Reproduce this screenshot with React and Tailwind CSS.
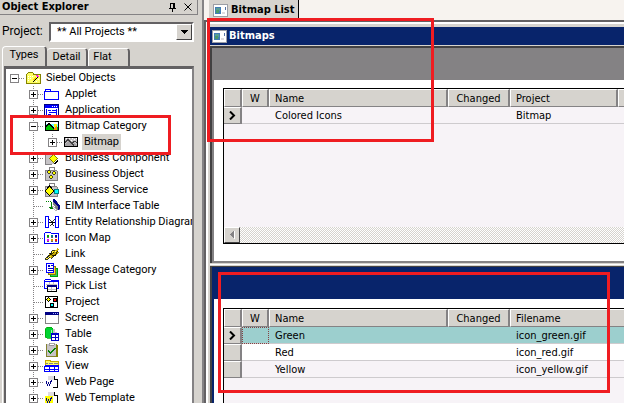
import clsx from "clsx";

const ICONS = {
  root: (
    <>
      <path d="M1.5 13.500V4.500L3.500 2.500H7.500L9 4.500H15.500V13.500Z" fill="#ffff63" stroke="#848200" />
      <path d="M3 6h1v1h-1zM5 6h1v1h-1zM7 6h1v1h-1zM3 8h1v1h-1zM5 8h1v1h-1zM3 10h1v1h-1zM13 9h1v1h-1zM11 11h1v1h-1z" fill="#fff" />
      <path d="M7 12h2v-1h1v-1h1v-1h1v-1h1v-1h-1v1h-1v1h-1v1h-1v1h-1z" fill="#000" />
      <path d="M8 9h1v-1h1v-1h1v2h-1v1h-2z" fill="#ffcf00" />
      <path d="M11 5h2v1h1v1h-2v-1h-1z" fill="#ff00ff" />
    </>
  ),
  applet: <path d="M1.500 5V3.500h5V5M.5 5.500h14v8H.5z" fill="#fff" stroke="#00f" />,
  application: (
    <>
      <path d="M.5 2.500h14v12H.5z" fill="#fff" stroke="#000084" />
      <path d="M1 3h13v3H1z" fill="#0000ff" />
      <path d="M8 4h1v1H8zM10 4h1v1h-1zM12 4h1v1h-1z" fill="#fff" />
      <path d="M4 8.500h3M5 10.500h7M4 12.500h3M8 8.500h4M2.500 7v7M12.500 7v7" stroke="#0000ff" />
    </>
  ),
  category: (
    <>
      <path d="M1.500 3.500h13v9h-13z" fill="#63ffff" stroke="#000" />
      <path d="M2 4h12v2H2z" fill="#fff" />
      <path d="M2 8l3-3 3 3 2 2 2-2 2 2v2H2z" fill="#00c700" />
      <path d="M2 8.500l3-3 6 6" fill="none" stroke="#000" />
      <path d="M10 6h3v3h-3z" fill="#ffef00" />
      <path d="M11 9l2-1v4h-3z" fill="#ff8a00" />
    </>
  ),
  bitmap: (
    <>
      <path d="M1.500 3.500h13v9h-13z" fill="#c6c3c6" stroke="#000" />
      <path d="M2 10l3-3 4 4 2-2 3 2v1H2z" fill="#a5a2a5" />
      <path d="M2 8.500l3-3 6 6M9 9l3-2 2 2" fill="none" stroke="#424142" />
      <path d="M3 4h1v1H3zM6 4h1v1H6zM9 4h1v1H9zM11 5h1v1h-1zM8 6h1v1H8zM13 4h1v1h-1z" fill="#fff" />
    </>
  ),
  component: (
    <>
      <path d="M1 3h9v11H1z" fill="#c6c3c6" />
      <path d="M1.500 3v11H8" fill="none" stroke="#848284" />
      <path d="M9.500 4.500l4 4-4 4-4-4z" fill="#ffff00" stroke="#848200" />
      <path d="M10 13h1v-1h1v-1h1v-1h1" fill="none" stroke="#000" />
    </>
  ),
  object: (
    <>
      <path d="M5 4V1.500h5V4" fill="none" stroke="#848284" />
      <path d="M1 4h11l1 1v9H1z" fill="#c6c3c6" stroke="#848284" />
      <path d="M5 4l2 2-2 2-2-2zM10 5l2 2-2 2-2-2zM7 9l2 2-2 2-2-2z" fill="#ffff00" stroke="#000" strokeWidth=".7" />
    </>
  ),
  service: (
    <>
      <path d="M5 4V1.500h5V4" fill="none" stroke="#848284" />
      <path d="M1 4h11l1 1v9H1z" fill="#c6c3c6" stroke="#848284" />
      <path d="M5.500 4l4.500 5-4.500 4.500L1 9z" fill="#ffff00" stroke="#000" />
      <path d="M10.500 7.500h4v4h-4z" fill="#00ffff" stroke="#008284" />
    </>
  ),
  eim: (
    <>
      <path d="M2 3.500h1M4 3.500h1M6 3.500h1" stroke="#008200" />
      <path d="M7.500 4v6M5 9.500h5M6 10.500h3" fill="none" stroke="#008200" />
      <path d="M9 2h3l4 6v4h-3L9 6z" fill="#848284" />
      <path d="M9 1h2l5 7v3l-2 1v-3l-5-5z" fill="#000084" />
      <path d="M9 8l4 4-1 1-4-4z" fill="#fff" stroke="#848284" strokeWidth=".6" />
    </>
  ),
  entity: (
    <>
      <path d="M1 2.500h3.500v11H1M15 2.500h-3.500v11H15M1.500 2v12M14.500 2v12" fill="none" stroke="#00f" />
      <path d="M5 8.500h6" fill="none" stroke="#000" />
      <path d="M5 5l3.500 3.500L5 12M11 5L8 8.500l3 3.500" fill="none" stroke="#000" strokeWidth=".8" />
    </>
  ),
  iconMap: (
    <>
      <path d="M.5 13.500V3.500l1-1h5l1 1h7v10z" fill="#fff" stroke="#00f" />
      <path d="M3 5h2v2H3z" fill="#00a200" />
      <path d="M7 5h2v2H7z" fill="#008284" />
      <path d="M11 5h2v2h-2z" fill="#0000a5" />
      <path d="M3 9h2v2H3z" fill="#ff00ff" />
      <path d="M7 9h2v2H7z" fill="#c69a00" />
      <path d="M11 9h2v2h-2z" fill="#ff0000" />
      <path d="M3 7.500h2M7 7.500h2M11 7.500h2M3 11.500h2M7 11.500h2M11 11.500h2" stroke="#636163" />
    </>
  ),
  link: (
    <>
      <path d="M1 13l5-5 3-4 2 1-2 4-5 4z" fill="#ffef31" stroke="#000" strokeWidth=".8" />
      <path d="M7 12l3-5 4-4M5 9l4 1 2-1 3-3" fill="none" stroke="#c6aa00" strokeWidth="2" />
      <path d="M7 13l3-3 4-5M3 12l7-6M5 7h3M8 9.500h4" fill="none" stroke="#000" strokeWidth=".8" />
      <path d="M12 3h1v1h-1zM11 5h1v1h-1zM4 11h1v1H4z" fill="#ffff9c" />
    </>
  ),
  message: (
    <>
      <path d="M6.500 6.500h7v8h-7z" fill="#31c763" stroke="#00a200" />
      <path d="M4.500 4.500h7v8h-7z" fill="#ffcf31" stroke="#848200" />
      <path d="M2.500 1.500h7v9h-7z" fill="#fff" stroke="#00f" />
      <path d="M4 3.500h2M4 4.500h2M7 3.500h2M4 6.500h5M4 8.500h5" stroke="#0000c6" />
    </>
  ),
  pickList: (
    <>
      <path d="M.5 10.500V2.500l1-1h5l1 1h7v8z" fill="#fff" stroke="#00f" />
      <path d="M1 3h13v1H1z" fill="#00f" />
      <path d="M2 6.500h11M2 8.500h2M5.500 4v4M9.500 4v4" stroke="#c6c3c6" />
      <path d="M3.500 7.500h9v6h-9z" fill="#fff" stroke="#000" />
      <path d="M3 7h10v2H3z" fill="#000084" />
      <path d="M4 11.500h8M7.500 9v4" stroke="#c6c3c6" />
    </>
  ),
  project: (
    <>
      <path d="M1.500 2.500h12v11h-12z" fill="#fff" stroke="#000" />
      <path d="M4 3h1v1h1v1h1v1H6v1H5v1H4V7H3V6H2V5h1V4h1z" fill="#000" />
      <path d="M4 4h1v1h1v1H5v1H4V6H3V5h1z" fill="#ffff00" />
      <path d="M9 4h4v4H9zM6 9h4v4H6z" fill="#000" />
      <path d="M10 5h2v2h-2z" fill="#ff0000" />
      <path d="M7 10h2v2H7z" fill="#00ffff" />
    </>
  ),
  screen: (
    <>
      <path d="M1.500 2.500h13v11h-13z" fill="#fff" stroke="#848284" />
      <path d="M1 2h14v3H1z" fill="#000084" />
      <path d="M9 3h1v1H9zM11 3h1v1h-1zM13 3h1v1h-1z" fill="#a5b2ff" />
    </>
  ),
  table: (
    <>
      <path d="M1 3l2-2h4l2 2v8l-2 1H3l-2-1z" fill="#00d331" stroke="#00a200" strokeWidth=".7" />
      <path d="M7 4h1v7H7z" fill="#9cf3b5" />
      <path d="M9 3h2v3h2v2H9z" fill="#c6c3c6" />
      <path d="M7.500 7.500h7v7h-7z" fill="#fff" stroke="#0000c6" />
      <path d="M8 8.500h6M8 11.500h6M11.500 9v5" stroke="#0000c6" />
    </>
  ),
  task: (
    <>
      <path d="M2 2h11v13H2z" fill="#c6c3c6" />
      <path d="M2.500 2v12.500H12.500V2" fill="none" stroke="#848231" />
      <path d="M12 3h2v12h-2z" fill="#848200" />
      <path d="M5 1h5v2H5z" fill="#fff" stroke="#848284" strokeWidth=".7" />
      <path d="M4 8.500l2.500 2.500 5-5" fill="none" stroke="#008200" strokeWidth="1.300" />
    </>
  ),
  view: (
    <>
      <path d="M1.500 7.500V2.500h5v1h8v4z" fill="#ffff63" stroke="#c6aa00" />
      <path d="M2 5.500h2M5 5.500h4M10 5.500h4" stroke="#848284" />
      <path d="M.5 8.500h14v5H.5z" fill="#fff" stroke="#00f" />
      <path d="M1 7.500h14M1 11.500h13M5.500 9v4M10.500 9v4" stroke="#00f" />
    </>
  ),
  webPage: (
    <>
      <path d="M4 2h6v4H4z" fill="#dedbde" />
      <path d="M10.500 2v3.500h3v8H9" fill="none" stroke="#000" />
      <path d="M2.500 7v3M3.500 10v2M4.500 8v2M5.500 10v2M6.500 7v3M7.500 6v2" fill="none" stroke="#000084" />
    </>
  ),
  webTemplate: (
    <>
      <path d="M4 2h6v4H4z" fill="#dedbde" />
      <path d="M10.500 2v3.500h3v8H9" fill="none" stroke="#000" />
      <path d="M1 6h8v8H1z" fill="#ffff00" />
      <path d="M2.500 8v3M3.500 11v2M4.500 9v2M5.500 11v2M6.500 8v3M7.500 7v2" fill="none" stroke="#000084" />
    </>
  ),
};

const TREE = [
  { label: "Applet", icon: "applet", state: "plus" },
  { label: "Application", icon: "application", state: "plus" },
  { label: "Bitmap Category", icon: "category", state: "minus" },
  { label: "Bitmap", icon: "bitmap", state: "plus", nested: true, selected: true },
  { label: "Business Component", icon: "component", state: "plus" },
  { label: "Business Object", icon: "object", state: "plus" },
  { label: "Business Service", icon: "service", state: "plus" },
  { label: "EIM Interface Table", icon: "eim" },
  { label: "Entity Relationship Diagram", icon: "entity", state: "plus" },
  { label: "Icon Map", icon: "iconMap", state: "plus" },
  { label: "Link", icon: "link" },
  { label: "Message Category", icon: "message", state: "plus" },
  { label: "Pick List", icon: "pickList" },
  { label: "Project", icon: "project" },
  { label: "Screen", icon: "screen", state: "plus" },
  { label: "Table", icon: "table", state: "plus" },
  { label: "Task", icon: "task", state: "plus" },
  { label: "View", icon: "view", state: "plus" },
  { label: "Web Page", icon: "webPage", state: "plus" },
  { label: "Web Template", icon: "webTemplate", state: "plus" },
];

// Dotted connector lines plus the optional +/- box
function Gutter({ state, top = true, bottom = true, branch = true }) {
  return (
    <svg width="19" height="16" viewBox="0 0 19 16" shapeRendering="crispEdges" className="shrink-0" aria-hidden="true">
      <g stroke="#848284" strokeDasharray="1 1">
        {top && <path d="M8.500 0v8" />}
        {bottom && <path d="M8.500 8v8" />}
        {branch && <path d="M9 8.500h10" />}
      </g>
      {state && (
        <>
          <path d="M4.500 4.500h8v8h-8z" fill="#fff" stroke="#848284" />
          <path d={state === "plus" ? "M6 8.500h5M8.500 6v5" : "M6 8.500h5"} stroke="#000" />
        </>
      )}
    </svg>
  );
}

function TreeIcon({ name }) {
  return (
    <svg width="16" height="16" viewBox="0 0 16 16" shapeRendering="crispEdges" className="shrink-0" aria-hidden="true">
      {ICONS[name]}
    </svg>
  );
}

function TreeRow({ item }) {
  return (
    <li className="flex h-4 items-center pl-[19px]">
      {item.nested && <Gutter branch={false} />}
      <Gutter state={item.state} bottom={!item.nested} />
      <TreeIcon name={item.icon} />
      <button className={clsx("ml-[3px] h-4 px-0.5 leading-4", item.selected && "bg-[#d6d3ce]")}>{item.label}</button>
    </li>
  );
}

function WindowIcon() {
  return (
    <svg width="15" height="13" viewBox="0 0 15 13" shapeRendering="crispEdges" className="shrink-0" aria-hidden="true">
      <path d="M0 0h15v13H0z" fill="#9c9ea5" />
      <path d="M1 1h13v11H1z" fill="#fff" />
      <path d="M2 3h6v7H2z" fill="#427db5" />
      <path d="M3 4h4v3H3z" fill="#5a9e94" />
      <path d="M3 6h3v3H3z" fill="#4a9a6b" />
      <path d="M9 8h3v2H9z" fill="#dedbde" />
      <path d="M12 3h1v3h-1z" fill="#5271a5" />
    </svg>
  );
}

function ExplorerPanel() {
  return (
    <aside className="flex w-[204px] shrink-0 flex-col border-r-2 border-[#848284] bg-[#d6d3ce] pr-1 font-['Roboto','Liberation_Sans',sans-serif] text-[11px]">
      <header className="flex h-[15px] items-center border-r border-b border-[#848284] pl-[2px] pr-[5px]">
        <h2 className="flex-1 font-['DejaVu_Sans_Condensed','DejaVu_Sans',sans-serif] text-[11px] leading-[14px] font-bold">Object Explorer</h2>
        <button aria-label="Auto hide" className="mr-[7px]">
          <svg width="9" height="10" viewBox="0 0 9 10" shapeRendering="crispEdges">
            <path d="M2 1h5v5h1v1H5v3H4V7H1V6h1z" fill="#000" />
            <path d="M3 2h2v4H3z" fill="#d6d3ce" />
          </svg>
        </button>
        <button aria-label="Close">
          <svg width="8" height="8" viewBox="0 0 8 8">
            <path d="M.5.5l7 7M7.500.5l-7 7" stroke="#000" />
          </svg>
        </button>
      </header>

      <div className="mt-[7px] flex h-5 items-center pr-1 pl-[2px]">
        <label htmlFor="project" className="w-[47px] pb-0.5 text-xs">Project:</label>
        <div className="flex h-5 min-w-0 flex-1 border-2 border-t-[#636163] border-r-white border-b-white border-l-[#636163] bg-white">
          <select id="project" className="min-w-0 flex-1 appearance-none pl-[6px] leading-4">
            <option>** All Projects **</option>
          </select>
          <span className="flex w-4 items-center justify-center border border-t-white border-r-[#424142] border-b-[#424142] border-l-white bg-[#d6d3ce]" aria-hidden="true">
            <svg width="7" height="4" viewBox="0 0 7 4" shapeRendering="crispEdges">
              <path d="M0 0h7v1H6v1H5v1H4v1H3V3H2V2H1V1H0z" />
            </svg>
          </span>
        </div>
      </div>

      <div role="tablist" className="mt-1 flex h-5 items-end pl-[2px]">
        <button role="tab" aria-selected="true" className="h-5 w-[45px] rounded-t-sm border-t border-r-2 border-l border-t-white border-r-[#636163] border-l-white pb-0.5">Types</button>
        <button role="tab" aria-selected="false" className="h-[18px] w-[41px] rounded-t-sm border-t border-r-2 border-t-white border-r-[#636163]">Detail</button>
        <button role="tab" aria-selected="false" className="h-[18px] w-[42px] rounded-t-sm border-t border-r-2 border-l border-t-white border-r-[#636163] border-l-white pr-3">Flat</button>
      </div>

      <div className="ml-[2px] flex min-h-0 flex-1 border-l border-white pl-px">
        <ul className="mr-1 min-w-0 flex-1 overflow-hidden border-t-[3px] border-r-2 border-l-2 border-t-[#636163] border-r-[#848284] border-l-[#636163] bg-white pt-px whitespace-nowrap">
          <li className="flex h-4 items-center">
            <Gutter state="minus" top={false} bottom={false} />
            <TreeIcon name="root" />
            <button className="ml-[3px] px-0.5 leading-4">Siebel Objects</button>
          </li>
          {TREE.map((item) => (
            <TreeRow key={item.label} item={item} />
          ))}
        </ul>
      </div>
    </aside>
  );
}

function HeaderCell({ children, center, last }) {
  return (
    <th
      className={clsx(
        "h-[18px] border-t border-b border-l border-t-white border-b-[#848284] border-l-white bg-[#d6d3ce] p-0 pt-px font-normal",
        center ? "text-center" : "pl-[5px] text-left",
        !last && "border-r-2 border-r-[#848284]",
      )}
    >
      {children}
    </th>
  );
}

function RecordGrid({ lastColumn, rows, trailing }) {
  return (
    <table className="w-full table-fixed border-separate border-spacing-0 text-[11px] leading-[14px]">
      <colgroup>
        <col className="w-[18px]" />
        <col className="w-[27px]" />
        <col className="w-[179px]" />
        <col className="w-[62px]" />
        <col className={trailing ? "w-[108px]" : ""} />
        {trailing && <col />}
      </colgroup>
      <thead>
        <tr>
          <HeaderCell />
          <HeaderCell center>W</HeaderCell>
          <HeaderCell>Name</HeaderCell>
          <HeaderCell center>Changed</HeaderCell>
          <HeaderCell last={!trailing}>{lastColumn}</HeaderCell>
          {trailing && <HeaderCell last />}
        </tr>
      </thead>
      <tbody>
        {rows.map((row) => {
          const cell = clsx("h-[17px] border-b border-[#cecbce] p-0 pt-0.5", row.active && "bg-[#9ccfce]", row.white && "bg-white");
          return (
            <tr key={row.name}>
              <td className="h-[17px] border-t border-r-2 border-b border-t-white border-r-[#848284] border-b-[#848284] bg-[#d6d3ce] p-0">
                {row.current && (
                  <svg width="7" height="9" viewBox="0 0 7 9" className="mx-auto" aria-label="Current record">
                    <path d="M1 .5l4 4-4 4" fill="none" stroke="#000" strokeWidth="2" />
                  </svg>
                )}
              </td>
              <td className={clsx(cell, row.active && "outline outline-dotted -outline-offset-1 outline-[#844142]")} />
              <td className={clsx(cell, "pl-[6px]")}>{row.name}</td>
              <td className={cell} />
              <td className={clsx(cell, "pl-[6px]")}>{row.value}</td>
              {trailing && <td className={cell} />}
            </tr>
          );
        })}
      </tbody>
    </table>
  );
}

function Workspace() {
  return (
    <main className="flex min-w-0 flex-1 flex-col bg-[#f7f3ef] font-['DejaVu_Sans_Condensed','DejaVu_Sans',sans-serif]">
      <div className="flex h-5 pl-[5px]">
        <button className="flex h-[18px] items-center gap-[3px] border-r border-black bg-[#d6d3ce] pt-0.5 pr-[3px] pl-1 text-[11px] font-bold">
          <WindowIcon />
          Bitmap List
        </button>
      </div>

      <div className="flex min-h-0 flex-1 flex-col border-t-2 border-l-2 border-[#636163] bg-[#d6d3ce]">
        <div className="flex min-h-0 flex-1 flex-col border-t-2 border-l-2 border-white pt-[3px] pl-[2px]">
          <h1 className="flex h-[18px] shrink-0 items-center gap-[2px] bg-[#08246b] pt-px pl-[2px] text-[11px] font-bold text-white">
            <WindowIcon />
            Bitmaps
          </h1>

          <section className="mt-px shrink-0 border-t-2 border-l-2 border-[#424142]">
            <div className="border-b-2 border-l-2 border-[#848284]">
              <div className="h-8 bg-[#848284]" />
              <div className="bg-white pt-2 pb-[17px] pl-[9px]">
                <div className="flex h-[156px] flex-col border-y border-l border-black bg-[#f7f3f7]">
                  <RecordGrid
                    trailing
                    lastColumn="Project"
                    rows={[{ name: "Colored Icons", value: "Bitmap", current: true }]}
                  />
                  <div className="mt-auto h-4 bg-[repeating-conic-gradient(#fff_0_25%,#d6d3ce_0_50%)] bg-[length:2px_2px]">
                    <button
                      aria-label="Scroll left"
                      className="flex h-4 w-4 items-center justify-center border border-t-white border-r-[#424142] border-b-[#424142] border-l-white bg-[#d6d3ce]"
                    >
                      <svg width="5" height="8" viewBox="0 0 5 8" shapeRendering="crispEdges">
                        <path d="M4 0h1v8H4z" fill="#fff" />
                        <path d="M4 0v7H3V6H2V5H1V4H0V3h1V2h1V1h1V0z" fill="#848284" />
                      </svg>
                    </button>
                  </div>
                </div>
              </div>
            </div>
          </section>

          <section className="mt-px flex min-h-0 flex-1 flex-col border-t border-white pt-px">
            <div className="flex min-h-0 flex-1 flex-col border-t border-l-2 border-[#424142]">
              <div className="flex min-h-0 flex-1 flex-col border-l-2 border-[#08246b] bg-white">
                <div className="h-8 shrink-0 bg-[#08246b]" />
                <div className="mt-[9px] ml-[9px] min-h-0 flex-1 overflow-hidden border-t border-l border-black bg-[#f7f3f7]">
                  <RecordGrid
                    lastColumn="Filename"
                    rows={[
                      { name: "Green", value: "icon_green.gif", current: true, active: true },
                      { name: "Red", value: "icon_red.gif", white: true },
                      { name: "Yellow", value: "icon_yellow.gif" },
                    ]}
                  />
                </div>
              </div>
            </div>
          </section>
        </div>
      </div>
    </main>
  );
}

export default function App() {
  return (
    <div className="relative flex h-screen overflow-hidden text-black">
      <ExplorerPanel />
      <Workspace />

      {/* callouts */}
      <div className="pointer-events-none absolute top-[115px] left-[10px] h-10 w-[161px] border-3 border-[#ef1c21]" />
      <div className="pointer-events-none absolute top-[18px] left-[207px] h-[124px] w-[227px] border-3 border-[#ef1c21]" />
      <div className="pointer-events-none absolute top-[272px] left-[218px] h-[121px] w-[392px] border-3 border-[#ef1c21]" />
    </div>
  );
}
